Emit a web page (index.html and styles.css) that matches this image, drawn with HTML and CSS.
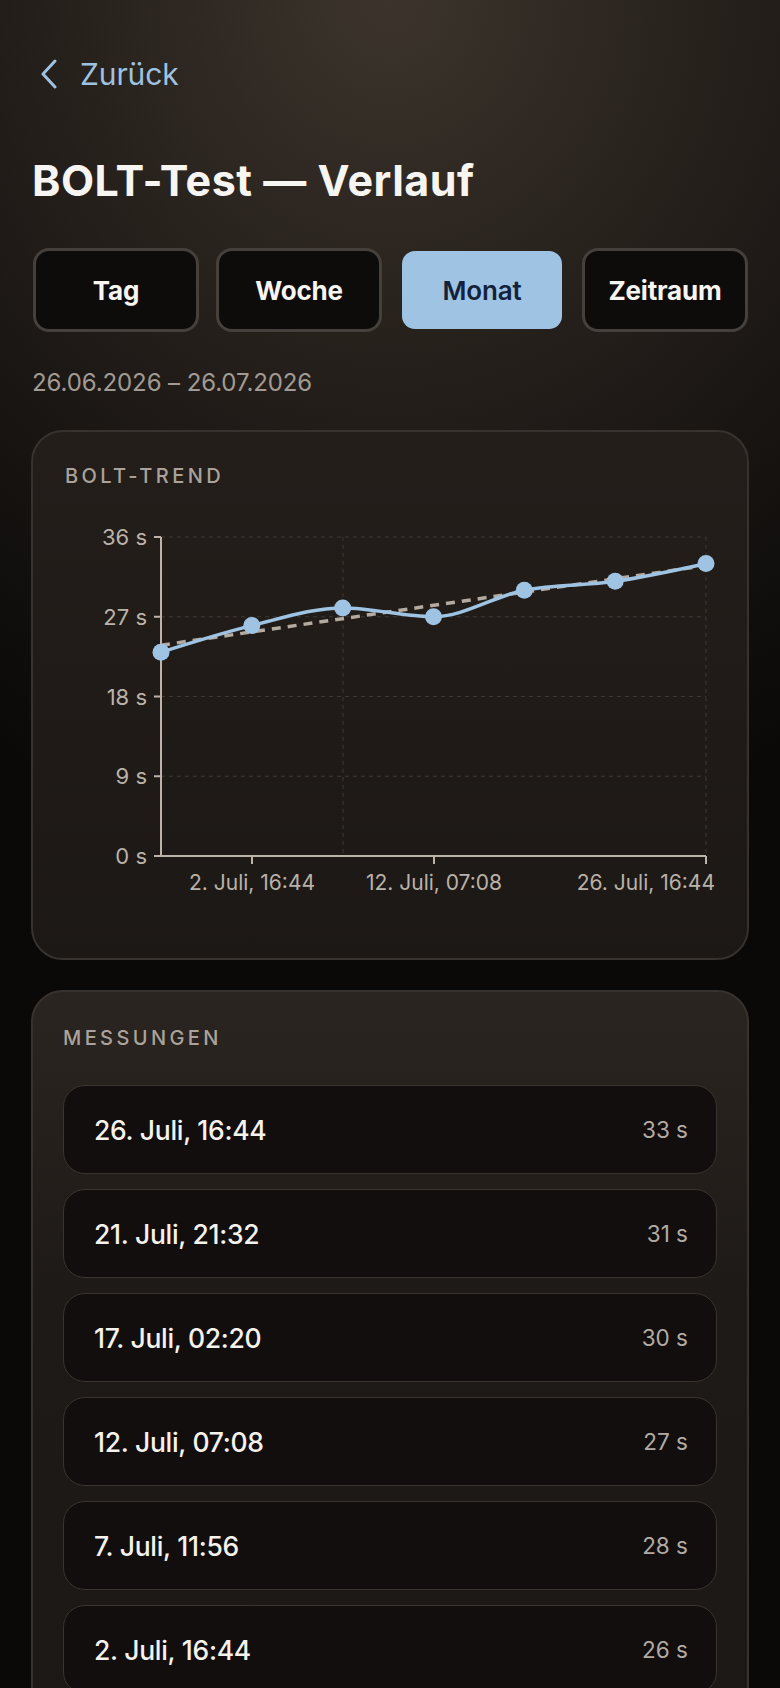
FILE: index.html
```html
<!DOCTYPE html>
<html lang="de">
<head>
<meta charset="utf-8">
<title>BOLT-Test — Verlauf</title>
<link rel="stylesheet" href="styles.css">
</head>
<body>
<main class="page">
  <a class="back" href="#">
    <svg class="back-icon" width="18" height="30" viewBox="0 0 18 30"><path d="M15 2 L3 15 L15 28" fill="none" stroke="#9fc2e0" stroke-width="3" stroke-linecap="round" stroke-linejoin="round"/></svg>
    <span>Zurück</span>
  </a>
  <h1 class="title">BOLT-Test — Verlauf</h1>
  <div class="tabs">
    <button class="tab">Tag</button>
    <button class="tab">Woche</button>
    <button class="tab active">Monat</button>
    <button class="tab">Zeitraum</button>
  </div>
  <p class="range">26.06.2026 – 26.07.2026</p>

  <section class="card chart-card">
    <h2 class="card-label">BOLT-TREND</h2>
    <svg class="chart" width="650" height="400" viewBox="0 0 650 400">
      <g stroke="#3e3834" stroke-width="1" stroke-dasharray="4 4">
        <line x1="96" y1="32" x2="641" y2="32"/>
        <line x1="96" y1="111.75" x2="641" y2="111.75"/>
        <line x1="96" y1="191.5" x2="641" y2="191.5"/>
        <line x1="96" y1="271.25" x2="641" y2="271.25"/>
        <line x1="278" y1="32" x2="278" y2="351"/>
        <line x1="641" y1="32" x2="641" y2="351"/>
      </g>
      <g stroke="#bcb4ac" stroke-width="2">
        <line x1="96" y1="32" x2="96" y2="352"/>
        <line x1="95" y1="351" x2="641" y2="351"/>
        <line x1="89" y1="32" x2="96" y2="32"/>
        <line x1="89" y1="111.75" x2="96" y2="111.75"/>
        <line x1="89" y1="191.5" x2="96" y2="191.5"/>
        <line x1="89" y1="271.25" x2="96" y2="271.25"/>
        <line x1="89" y1="351" x2="96" y2="351"/>
        <line x1="187" y1="351" x2="187" y2="359"/>
        <line x1="369" y1="351" x2="369" y2="359"/>
        <line x1="641" y1="351" x2="641" y2="359"/>
      </g>
      <g class="axis-text y-text" text-anchor="end">
        <text x="82" y="40">36 s</text>
        <text x="82" y="119.5">27 s</text>
        <text x="82" y="199.5">18 s</text>
        <text x="82" y="279">9 s</text>
        <text x="82" y="359">0 s</text>
      </g>
      <g class="axis-text">
        <text x="187" y="385" text-anchor="middle">2. Juli, 16:44</text>
        <text x="369" y="385" text-anchor="middle">12. Juli, 07:08</text>
        <text x="650" y="385" text-anchor="end">26. Juli, 16:44</text>
      </g>
      <line x1="96" y1="140.2" x2="641" y2="60.5" stroke="#b3aaa1" stroke-width="3.5" stroke-dasharray="9 7"/>
      <path d="M96 147.2 C126.28 137.59 156.52 127.99 186.8 120.6 C217.08 113.22 247.42 102.9 277.7 102.9 C307.98 102.9 338.22 111.7 368.5 111.7 C398.78 111.7 429.02 91.1 459.3 85.2 C489.58 79.3 519.92 80.74 550.2 76.3 C580.48 71.86 610.72 65.23 641 58.6" fill="none" stroke="#9ec3e3" stroke-width="3.5"/>
      <g fill="#9ec3e3">
        <circle cx="96" cy="147.2" r="8.5"/>
        <circle cx="186.8" cy="120.6" r="8.5"/>
        <circle cx="277.7" cy="102.9" r="8.5"/>
        <circle cx="368.5" cy="111.7" r="8.5"/>
        <circle cx="459.3" cy="85.2" r="8.5"/>
        <circle cx="550.2" cy="76.3" r="8.5"/>
        <circle cx="641" cy="58.6" r="8.5"/>
      </g>
    </svg>
  </section>

  <section class="card list-card">
    <h2 class="card-label">MESSUNGEN</h2>
    <ul class="list">
      <li class="item"><span class="item-date">26. Juli, 16:44</span><span class="item-val">33 s</span></li>
      <li class="item"><span class="item-date">21. Juli, 21:32</span><span class="item-val">31 s</span></li>
      <li class="item"><span class="item-date">17. Juli, 02:20</span><span class="item-val">30 s</span></li>
      <li class="item"><span class="item-date">12. Juli, 07:08</span><span class="item-val">27 s</span></li>
      <li class="item"><span class="item-date">7. Juli, 11:56</span><span class="item-val">28 s</span></li>
      <li class="item"><span class="item-date">2. Juli, 16:44</span><span class="item-val">26 s</span></li>
    </ul>
  </section>
</main>
</body>
</html>
```

FILE: styles.css
```css
* { box-sizing: border-box; }
html, body { margin: 0; padding: 0; }
body {
  font-family: Inter, "Noto Sans", sans-serif;
  color: #f5f3ef;
  background-color: #0a0908;
  background-image: radial-gradient(130% 62% at 50% 0%, #3c342c 0%, #28221d 30%, #151210 58%, #0a0908 80%);
  background-repeat: no-repeat;
  min-height: 1688px;
  overflow: hidden;
}
.page {
  padding: 54px 31px 0;
}
.back {
  display: flex;
  align-items: center;
  gap: 22px;
  height: 40px;
  color: #9fc2e0;
  text-decoration: none;
  font-size: 30px;
  font-weight: 400;
  letter-spacing: -0.1px;
}
.back-icon { margin-left: 9px; flex: none; }
.title {
  margin: 60px 0 0 1px;
  font-size: 43px;
  line-height: 52px;
  font-weight: 700;
  letter-spacing: 0.5px;
  color: #f7f5f2;
}
.tabs {
  margin: 42px 1px 0 2px;
  display: grid;
  grid-template-columns: repeat(4, 1fr);
  gap: 17px;
}
.tab {
  height: 84px;
  border: 3px solid #45403c;
  border-radius: 16px;
  background: #0e0c0b;
  color: #f7f5f2;
  font-family: inherit;
  font-size: 26px;
  font-weight: 700;
  letter-spacing: -0.2px;
  padding: 0;
}
.tab.active {
  border-color: transparent;
  background: #9ec3e3;
  background-clip: padding-box;
  color: #13223a;
  font-weight: 600;
}
.range {
  margin: 37px 0 0 1px;
  font-size: 24px;
  line-height: 28px;
  color: #a29b94;
  letter-spacing: -0.1px;
}
.card {
  border: 2px solid #37322e;
  border-radius: 32px;
}
.chart-card {
  margin-top: 33px;
  height: 530px;
  padding: 32px 32px 0;
  background: linear-gradient(180deg, #231e1a 0%, #1c1815 100%);
}
.card-label {
  margin: 0;
  font-size: 20px;
  line-height: 24px;
  font-weight: 500;
  letter-spacing: 3.4px;
  color: #aba39b;
}
.chart {
  display: block;
  margin-top: 17px;
  overflow: visible;
}
.axis-text text {
  font-family: Inter, "Noto Sans", sans-serif;
  font-size: 21px;
  fill: #bab2aa;
}
.y-text text { font-size: 22px; }
.list-card {
  margin-top: 30px;
  padding: 34px 30px 40px;
  background: linear-gradient(180deg, #2a2520 0%, #1e1a17 40%, #1c1816 100%);
}
.list {
  list-style: none;
  margin: 35px 0 0;
  padding: 0;
  display: flex;
  flex-direction: column;
  gap: 15px;
}
.item {
  height: 89px;
  display: flex;
  align-items: center;
  justify-content: space-between;
  padding: 0 28px 0 30px;
  border: 1.5px solid #3a332f;
  border-radius: 22px;
  background: #110e0d;
}
.item-date {
  font-size: 26.5px;
  font-weight: 500;
  color: #f5f2ee;
  letter-spacing: -0.3px;
}
.item-val {
  font-size: 22.5px;
  color: #b2aba4;
}
```
